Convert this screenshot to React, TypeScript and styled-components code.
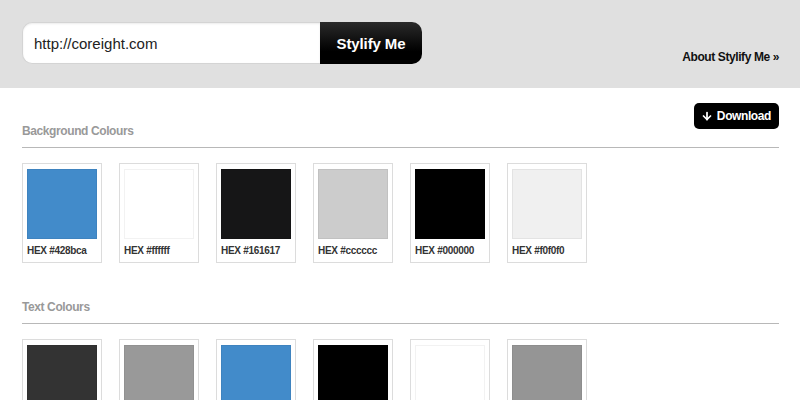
import React from "react";
import styled, { createGlobalStyle } from "styled-components";
import { ArrowDown } from "lucide-react";

const Global = createGlobalStyle`
  html, body { margin: 0; padding: 0; background: #fff; }
  body { font-family: "Liberation Sans", Arial, sans-serif; }
  * { box-sizing: border-box; }
`;

const Header = styled.header`
  height: 88px;
  background: #e0e0e0;
  display: flex;
  justify-content: space-between;
  align-items: flex-start;
  padding: 22px 21px 0 22px;
`;

const Form = styled.form`
  display: flex;
  height: 42px;
`;

const UrlInput = styled.input`
  width: 298px;
  height: 42px;
  border: 1px solid #d4d4d4;
  border-right: none;
  border-radius: 10px 0 0 10px;
  background: #fff;
  padding: 0 0 0 11px;
  font-family: "Liberation Sans", Arial, sans-serif;
  font-size: 15px;
  color: #222;
  outline: none;
  box-shadow: inset 0 1px 2px rgba(0, 0, 0, 0.08);
`;

const GoButton = styled.button`
  width: 102px;
  height: 42px;
  border: none;
  border-radius: 0 10px 10px 0;
  background: linear-gradient(#2a2a2a, #000 70%);
  color: #fff;
  font-family: "Liberation Sans", Arial, sans-serif;
  font-weight: bold;
  font-size: 15px;
  letter-spacing: -0.1px;
  padding: 0;
`;

const AboutLink = styled.a`
  margin-top: 28px;
  font-size: 12px;
  font-weight: bold;
  letter-spacing: -0.4px;
  color: #111;
  text-decoration: none;
`;

const Main = styled.main`
  padding: 0 21px 0 22px;
`;

const Section = styled.section<{ $top: number }>`
  margin-top: ${(p) => p.$top}px;
`;

const SectionHeader = styled.div`
  display: flex;
  justify-content: space-between;
  align-items: flex-end;
  border-bottom: 1px solid #b8b8b8;
  padding-bottom: 9px;
`;

const Title = styled.h2`
  margin: 0;
  font-size: 12px;
  line-height: 14px;
  font-weight: bold;
  letter-spacing: -0.4px;
  color: #999;
`;

const DownloadButton = styled.button`
  display: flex;
  align-items: center;
  gap: 4px;
  height: 26px;
  padding: 0 8px 0 7px;
  margin-bottom: 9px;
  border: none;
  border-radius: 5px;
  background: #000;
  color: #fff;
  font-family: "Liberation Sans", Arial, sans-serif;
  font-size: 12px;
  font-weight: bold;
  letter-spacing: -0.4px;
`;

const Swatches = styled.div`
  display: flex;
  gap: 17px;
  margin-top: 15px;
`;

const Card = styled.div`
  width: 80px;
  height: 100px;
  border: 1px solid #dcdcdc;
  padding: 5px 4px 0 4px;
  background: #fff;
`;

const Chip = styled.div<{ $c: string }>`
  width: 70px;
  height: 70px;
  background: ${(p) => p.$c};
  border: 1px solid rgba(0, 0, 0, 0.05);
`;

const Label = styled.div`
  margin-top: 6px;
  font-size: 10px;
  font-weight: bold;
  letter-spacing: -0.3px;
  color: #333;
  white-space: nowrap;
`;

const bg = ["#428bca", "#ffffff", "#161617", "#cccccc", "#000000", "#f0f0f0"];
const text = ["#333333", "#999999", "#428bca", "#000000", "#ffffff", "#959595"];

export default function App() {
  return (
    <>
      <Global />
      <Header>
        <Form onSubmit={(e) => e.preventDefault()}>
          <UrlInput defaultValue="http://coreight.com" />
          <GoButton type="submit">Stylify Me</GoButton>
        </Form>
        <AboutLink href="#">About Stylify Me »</AboutLink>
      </Header>
      <Main>
        <Section $top={15}>
          <SectionHeader>
            <Title>Background Colours</Title>
            <DownloadButton>
              <ArrowDown size={12} strokeWidth={3.5} />
              Download
            </DownloadButton>
          </SectionHeader>
          <Swatches>
            {bg.map((c) => (
              <Card key={c}>
                <Chip $c={c} />
                <Label>HEX {c}</Label>
              </Card>
            ))}
          </Swatches>
        </Section>
        <Section $top={37}>
          <SectionHeader>
            <Title>Text Colours</Title>
          </SectionHeader>
          <Swatches>
            {text.map((c) => (
              <Card key={c}>
                <Chip $c={c} />
                <Label>HEX {c}</Label>
              </Card>
            ))}
          </Swatches>
        </Section>
      </Main>
    </>
  );
}
